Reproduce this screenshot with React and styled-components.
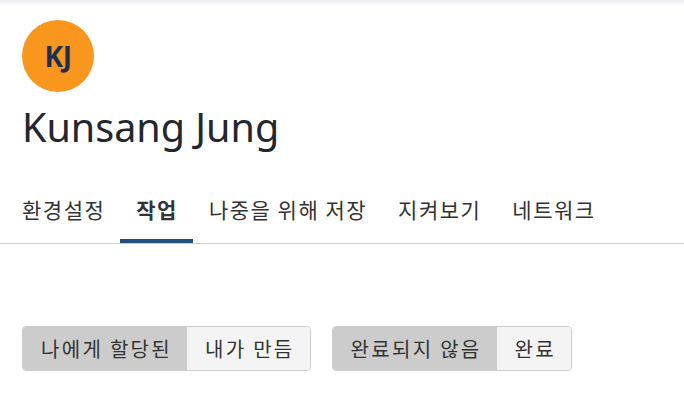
import React, { useState } from 'react';
import styled, { createGlobalStyle } from 'styled-components';

const GlobalStyle = createGlobalStyle`
  body {
    margin: 0;
    background: #fff;
    font-family: 'Noto Sans', 'Noto Sans CJK KR', sans-serif;
    color: #333;
  }
`;

const Page = styled.div`
  min-height: 406px;
  background: linear-gradient(#e9ebee, #fff 6px);
`;

const Profile = styled.div`
  padding: 20px 22px 0;
`;

const Avatar = styled.div`
  width: 72px;
  height: 72px;
  border-radius: 50%;
  background: #f8961e;
  color: #1d3050;
  display: flex;
  align-items: center;
  justify-content: center;
  font-family: 'Noto Sans', sans-serif;
  font-weight: 700;
  font-size: 28px;
  letter-spacing: -0.5px;
`;

const Name = styled.h1`
  margin: 12px 0 0;
  font-family: 'Noto Sans', sans-serif;
  font-weight: 400;
  font-size: 39.5px;
  line-height: 46px;
  color: #23262d;
`;

const TabBar = styled.nav`
  display: flex;
  margin-top: 44px;
  padding-left: 6px;
  border-bottom: 1px solid #cccccc;
`;

const Tab = styled.div`
  padding: 0 15px 15px 16px;
  font-family: 'Noto Sans CJK KR', sans-serif;
  font-size: 21px;
  line-height: 30px;
  letter-spacing: 1.5px;
  color: #333;
  font-weight: ${(p) => (p.$active ? 700 : 400)};
  border-bottom: 4px solid ${(p) => (p.$active ? '#22507f' : 'transparent')};
  cursor: pointer;
`;

const Filters = styled.div`
  display: flex;
  gap: 21px;
  padding: 82px 22px 0;
`;

const Group = styled.div`
  display: flex;
  border: 1px solid #cccccc;
  border-radius: 4px;
  overflow: hidden;
`;

const Segment = styled.button`
  border: none;
  margin: 0;
  padding: 9px 15px 9px 18px;
  font-family: 'Noto Sans CJK KR', sans-serif;
  font-size: 20px;
  line-height: 25px;
  letter-spacing: 2.3px;
  color: #333;
  background: ${(p) => (p.$on ? '#cccccc' : '#f4f4f4')};
  cursor: pointer;
`;

const tabs = ['환경설정', '작업', '나중을 위해 저장', '지켜보기', '네트워크'];

export default function App() {
  const [tab, setTab] = useState(1);
  const [mine, setMine] = useState(0);
  const [done, setDone] = useState(0);

  return (
    <Page>
      <GlobalStyle />
      <Profile>
        <Avatar>KJ</Avatar>
        <Name>Kunsang Jung</Name>
      </Profile>
      <TabBar>
        {tabs.map((t, i) => (
          <Tab key={t} $active={tab === i} onClick={() => setTab(i)}>
            {t}
          </Tab>
        ))}
      </TabBar>
      <Filters>
        <Group>
          <Segment $on={mine === 0} onClick={() => setMine(0)}>나에게 할당된</Segment>
          <Segment $on={mine === 1} onClick={() => setMine(1)}>내가 만듬</Segment>
        </Group>
        <Group>
          <Segment $on={done === 0} onClick={() => setDone(0)}>완료되지 않음</Segment>
          <Segment $on={done === 1} onClick={() => setDone(1)}>완료</Segment>
        </Group>
      </Filters>
    </Page>
  );
}
